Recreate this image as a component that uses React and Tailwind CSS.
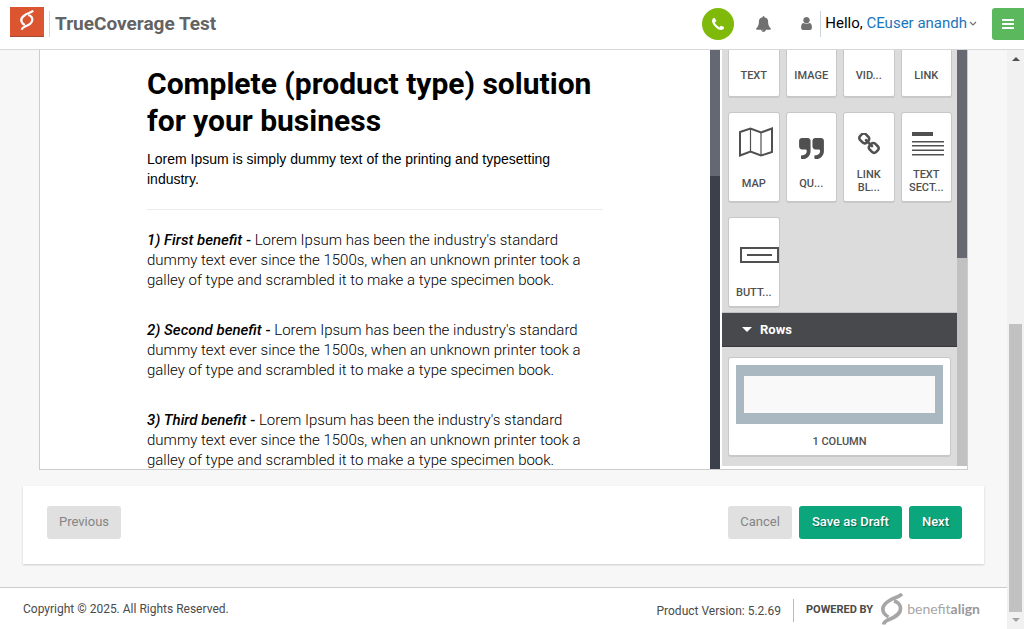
import React from "react";

const PATHS = {
  phone:
    "M1408 1112q0 27-10 70.5t-21 68.5q-21 50-122 106-94 51-186 51-27 0-53-3.5t-57.5-12.5-47-14.5-55.5-20.5-49-18q-98-35-175-83-127-79-264-216t-216-264q-48-77-83-175-3-9-18-49t-20.5-55.5-14.5-47-12.5-57.5-3.5-53q0-92 51-186 56-101 106-122 25-11 68.5-21t70.5-10q14 0 21 3 18 6 53 76 11 19 30 54t35 63.5 31 53.5q3 4 17.5 25t21.5 35.5 7 28.5q0 20-28.5 50t-62 55-62 53-28.5 46q0 9 5 22.5t8.5 20.5 14 24 11.5 19q76 137 174 235t235 174q2 1 19 11.5t24 14 20.5 8.5 22.5 5q18 0 46-28.5t53-62 55-62 50-28.5q14 0 28.5 7t35.5 21.5 25 17.5q25 15 53.5 31t63.5 35 54 30q70 35 76 53 3 7 3 21z",
  bell:
    "M912 1696q0-16-16-16-59 0-101.5-42.5t-42.5-101.5q0-16-16-16t-16 16q0 73 51.5 124.5t124.5 51.5q16 0 16-16zm816-288q0 52-38 90t-90 38h-448q0 106-75 181t-181 75-181-75-75-181h-448q-52 0-90-38t-38-90q50-42 91-88t85-119.5 74.5-158.5 50-206 19.5-260q0-152 117-282.5t307-158.5q-8-19-8-39 0-40 28-68t68-28 68 28 28 68q0 20-8 39 190 28 307 158.5t117 282.5q0 139 19.5 260t50 206 74.5 158.5 85 119.5 91 88z",
  user:
    "M1536 1399q0 109-62.5 187t-150.5 78h-854q-88 0-150.5-78t-62.5-187q0-85 8.5-160.5t31.5-152 58.5-131 94-89 134.5-34.5q131 128 313 128t313-128q76 0 134.5 34.5t94 89 58.5 131 31.5 152 8.5 160.5zm-256-887q0 159-112.5 271.5t-271.5 112.5-271.5-112.5-112.5-271.5 112.5-271.5 271.5-112.5 271.5 112.5 112.5 271.5z",
  quote:
    "M832 320v704q0 104-40.5 198.5t-109.5 163.5-163.5 109.5-198.5 40.5h-64q-26 0-45-19t-19-45v-128q0-26 19-45t45-19h64q106 0 181-75t75-181v-32q0-40-28-68t-68-28h-224q-80 0-136-56t-56-136v-384q0-80 56-136t136-56h384q80 0 136 56t56 136zm896 0v704q0 104-40.5 198.5t-109.5 163.5-163.5 109.5-198.5 40.5h-64q-26 0-45-19t-19-45v-128q0-26 19-45t45-19h64q106 0 181-75t75-181v-32q0-40-28-68t-68-28h-224q-80 0-136-56t-56-136v-384q0-80 56-136t136-56h384q80 0 136 56t56 136z",
  link:
    "M1520 1216q0-40-28-68l-208-208q-28-28-68-28-42 0-72 32 3 3 19 18.5t21.5 21.5 15 19 13 25.5 3.5 27.5q0 40-28 68t-68 28q-15 0-27.5-3.5t-25.5-13-19-15-21.5-21.5-18.5-19q-33 31-33 73 0 40 28 68l206 207q27 27 68 27 40 0 68-26l147-146q28-28 28-67zm-703-705q0-40-28-68l-206-207q-28-28-68-28-39 0-68 27l-147 146q-28 28-28 67 0 40 28 68l208 208q27 27 68 27 42 0 72-31-3-3-19-18.5t-21.5-21.5-15-19-13-25.5-3.5-27.5q0-40 28-68t68-28q15 0 27.5 3.5t25.5 13 19 15 21.5 21.5 18.5 19q33-31 33-73zm895 705q0 120-85 203l-147 146q-83 83-203 83-121 0-204-85l-206-207q-83-83-83-203 0-123 88-209l-88-88q-86 88-208 88-120 0-204-84l-208-208q-84-84-84-204t85-203l147-146q83-83 203-83 121 0 204 85l206 207q83 83 83 203 0 123-88 209l88 88q86-88 208-88 120 0 204 84l208 208q84 84 84 204z",
};

function Glyph({ name, viewBox, className }) {
  return (
    <svg viewBox={viewBox} className={className} fill="currentColor" aria-hidden="true">
      <path d={PATHS[name]} />
    </svg>
  );
}

function Knot({ className }) {
  return (
    <svg viewBox="0 0 22 32" className={className} fill="none" stroke="currentColor" strokeWidth="3.600" aria-hidden="true">
      <path d="M21 1C17.500 4.500 13 4.500 8.500 7.500C2.500 11 0.500 15.500 3 20C4 21.800 5.500 23 7.500 24" />
      <path d="M13 8C17 9 19.800 12 19.500 16C19 22 13 24.500 8 26.500C5 27.700 3 29 2.500 31.500" />
    </svg>
  );
}

function MapIcon() {
  return (
    <svg viewBox="0 0 34 30" className="h-[30px] w-[34px] shrink-0" fill="none" stroke="currentColor" strokeWidth="2" aria-hidden="true">
      <path d="M1 5L11.500 1.500L22 5.500L33 1.500V25L22 28.500L11.500 24.500L1 28.500Z" />
      <path d="M11.500 1.500V24.500M22 5.500V28.500" strokeWidth="1.200" />
    </svg>
  );
}

function TextSectionIcon() {
  return (
    <svg viewBox="0 0 32 24" className="h-6 w-8 shrink-0" fill="currentColor" aria-hidden="true">
      <path d="M0 0h21v4H0zM0 9h32v1.500H0zM0 13h32v1.500H0zM0 17.500h32v1.500H0zM0 22h32v1.500H0z" />
    </svg>
  );
}

function ButtonIcon() {
  return (
    <svg viewBox="0 0 39 16" className="h-4 w-[39px] shrink-0" fill="none" stroke="currentColor" strokeWidth="2" aria-hidden="true">
      <path d="M1 1H38V15H1Z" />
      <path d="M7 8H32" />
    </svg>
  );
}

const TILES = [
  {
    lines: ["MAP"],
    icon: <MapIcon />,
    pad: "pt-[14px] pl-[5px]",
    bottom: "pb-[11px]",
  },
  {
    lines: ["QU..."],
    icon: <Glyph name="quote" viewBox="64 128 1664 1408" className="h-[21px] w-[25px]" />,
    pad: "pt-[25px]",
    bottom: "pb-[11px]",
  },
  {
    lines: ["LINK", "BL..."],
    icon: <Glyph name="link" viewBox="80 80 1632 1632" className="size-[22px]" />,
    pad: "pt-5",
    bottom: "pb-[7px]",
  },
  {
    lines: ["TEXT", "SECT..."],
    icon: <TextSectionIcon />,
    pad: "pt-[19px] pl-1",
    bottom: "pb-[7px]",
  },
  {
    lines: ["BUTT..."],
    icon: <ButtonIcon />,
    pad: "pt-[29px] pl-[11px]",
    bottom: "pb-[7px]",
  },
];

const BENEFITS = ["1) First benefit", "2) Second benefit", "3) Third benefit"];

function Tile({ lines, icon, pad, bottom }) {
  return (
    <button
      type="button"
      className={
        "flex h-[91px] min-w-0 flex-col overflow-hidden rounded-[3px] border border-b-2 border-[#c8c8c8] bg-white text-[11px] leading-[13px] font-medium text-[#505050] " +
        bottom
      }
    >
      <span className={"flex w-full flex-1 justify-center " + pad}>{icon}</span>
      <span className="flex w-full flex-col items-center">
        {lines.map((line) => (
          <span key={line}>{line}</span>
        ))}
      </span>
    </button>
  );
}

function Header() {
  return (
    <header className="flex h-[50px] shrink-0 items-center border-b border-[#d8d8d8] bg-white pb-[2px] pl-[10px]">
      <div className="mb-[3px] flex h-[30px] w-[34px] items-center justify-center border-b border-[#a34a33] bg-[#db5531] pb-1 text-white">
        <Knot className="h-5 w-[14px]" />
      </div>
      <h1 className="ml-[5px] flex h-[26px] items-center border-l border-[#d8d8d8] pl-[5px] text-[19px] leading-6 font-bold text-[#636363]">
        TrueCoverage Test
      </h1>
      <div className="ml-auto flex items-center">
        <button type="button" aria-label="Call" className="flex size-8 items-center justify-center rounded-full bg-[#7fba0b] text-white">
          <Glyph name="phone" viewBox="0 0 1408 1408" className="size-3" />
        </button>
        <button type="button" aria-label="Notifications" className="ml-[22px] text-[#707070]">
          <Glyph name="bell" viewBox="64 0 1664 1792" className="h-4 w-[15px]" />
        </button>
        <button type="button" aria-label="Profile" className="ml-[30px] text-[#707070]">
          <Glyph name="user" viewBox="256 128 1280 1536" className="h-[13px] w-[11px]" />
        </button>
        <div className="ml-2 flex h-[26px] items-center border-l border-[#ccd6e0] pl-1 text-[15px] text-black">
          <span>
            Hello, <a href="#account" className="text-[#1b75bb]">CEuser anandh</a>
          </span>
          <svg viewBox="0 0 8 5" className="ml-[2px] h-[5px] w-2" fill="none" stroke="#707070" strokeWidth="1.200" aria-hidden="true">
            <path d="M1 1L4 4L7 1" />
          </svg>
        </div>
        <button type="button" aria-label="Menu" className="ml-[15px] flex size-8 items-center justify-center rounded-l-[3px] bg-[#5cb85c] text-white">
          <svg viewBox="0 0 12 10" className="h-[10px] w-3" fill="currentColor" aria-hidden="true">
            <path d="M0 0h12v2H0zM0 4h12v2H0zM0 8h12v2H0z" />
          </svg>
        </button>
      </div>
    </header>
  );
}

function Preview() {
  return (
    <div className="min-w-0 flex-1 overflow-hidden bg-white pr-[107px] pl-[107px] text-black">
      <h2 className="pt-[15px] text-[30px] leading-[37px] font-bold">
        Complete (product type) solution
        <br />
        for your business
      </h2>
      <p className="mt-[10px] max-w-[420px] font-['Liberation_Sans',sans-serif] text-[14px] leading-5">
        Lorem Ipsum is simply dummy text of the printing and typesetting industry.
      </p>
      <hr className="mt-5 mb-5 border-[#ececec]" />
      {BENEFITS.map((title) => (
        <p key={title} className="mb-[30px] max-w-[440px] text-[15px] leading-5 font-light">
          <em className="font-medium">{title}</em>
          <span className="font-medium"> -</span> Lorem Ipsum has been the industry's standard dummy text ever since the
          1500s, when an unknown printer took a galley of type and scrambled it to make a type specimen book.
        </p>
      ))}
    </div>
  );
}

function Blocks() {
  return (
    <aside className="flex w-[245px] shrink-0">
      <div className="min-w-0 flex-1 overflow-hidden bg-[#dcdcdc]">
        <div className="grid grid-cols-4 gap-x-[6px] pr-[5px] pl-[6px]">
          {["TEXT", "IMAGE", "VID...", "LINK"].map((label) => (
            <button
              key={label}
              type="button"
              className="h-12 min-w-0 rounded-b-[3px] border-x border-b-2 border-[#c8c8c8] bg-white pt-1 text-[11px] leading-[13px] font-medium text-[#505050]"
            >
              {label}
            </button>
          ))}
        </div>
        <div className="mt-[14px] grid grid-cols-4 gap-x-[6px] gap-y-[14px] pr-[5px] pl-[6px]">
          {TILES.map((tile) => (
            <Tile key={tile.lines[0]} {...tile} />
          ))}
        </div>
        <button
          type="button"
          aria-expanded="true"
          className="mt-1 flex h-[35px] w-full items-center border-t border-b border-t-[#c0c0c0] border-b-[#38363a] bg-[#48494c] pl-5 text-[13px] font-bold text-white"
        >
          <svg viewBox="0 0 10 5" className="mr-2 h-[5px] w-[10px]" fill="currentColor" aria-hidden="true">
            <path d="M0 0H10L5 5Z" />
          </svg>
          <span>Rows</span>
        </button>
        <div className="px-[6px] pt-[10px]">
          <button
            type="button"
            className="flex w-full flex-col items-center rounded-[3px] border border-b-2 border-[#c8c8c8] bg-white px-[7px] pt-[7px] pb-[7px] text-[11px] leading-[13px] font-medium text-[#505050]"
          >
            <span className="block h-[59px] w-full border-x-8 border-y-11 border-[#a9b8c1] bg-[#f9f9f9]" />
            <span className="mt-[11px]">1 COLUMN</span>
          </button>
        </div>
      </div>
      <div className="flex w-[10px] flex-col bg-[#c1c1c1]">
        <div className="h-1/2 bg-[#666872]" />
      </div>
    </aside>
  );
}

function Actions() {
  const gray = "h-[33px] rounded-[3px] bg-[#e0e0e0] px-3 pb-[2px] text-[13px] text-[#848484]";
  const green =
    "h-[33px] rounded-[3px] bg-[#0ba67c] px-[13px] pb-[2px] text-[13px] font-medium text-white [text-shadow:1px_1px_1px_rgba(0,0,0,0.4)]";
  return (
    <div className="flex items-center bg-white pt-5 pr-[22px] pb-[25px] pl-6 shadow-[0_1px_2px_rgba(0,0,0,0.18)]">
      <button type="button" className={gray}>Previous</button>
      <div className="ml-auto flex items-center gap-[7px]">
        <button type="button" className={gray}>Cancel</button>
        <button type="button" className={green}>Save as Draft</button>
        <button type="button" className={green}>Next</button>
      </div>
    </div>
  );
}

function Footer() {
  return (
    <footer className="flex h-[42px] shrink-0 items-center border-t border-[#cccccc] bg-white pr-[27px] pl-[23px] text-[12px] text-[#4a4a4a]">
      <span>Copyright © 2025. All Rights Reserved.</span>
      <span className="ml-auto pt-1">Product Version: 5.2.69</span>
      <span className="mt-1 ml-3 flex h-[23px] items-center border-l border-[#bbbbbb] pl-3 text-[11px] font-bold">POWERED BY</span>
      <span className="ml-2 flex items-center text-[#a6a6a6]">
        <Knot className="h-8 w-[22px]" />
        <span className="ml-1 font-['Lato',sans-serif] text-[14px]">
          benefit<b className="text-[#999999]">align</b>
        </span>
      </span>
    </footer>
  );
}

export default function App() {
  return (
    <div className="flex h-screen flex-col overflow-hidden bg-[#f7f7f7] font-['Roboto',sans-serif]">
      <Header />
      <div className="flex min-h-0 flex-1">
        <div className="flex min-w-0 flex-1 flex-col">
          <main className="mr-[23px] mb-[23px] ml-[23px] flex min-h-0 flex-1 flex-col">
            <div className="mx-4 mb-4 flex min-h-0 flex-1 border border-t-0 border-[#cccccc] bg-white">
              <Preview />
              <div className="mr-[2px] w-[10px] shrink-0 bg-[#3c404b]">
                <div className="h-[30%] bg-[#636872]" />
              </div>
              <div className="mb-[3px] flex shrink-0">
                <Blocks />
              </div>
            </div>
            <Actions />
          </main>
          <Footer />
        </div>
        <div className="flex w-[17px] shrink-0 flex-col items-center bg-[#f1f1f1] py-[7px]">
          <svg viewBox="0 0 8 4" className="h-1 w-2 shrink-0" fill="#505050" aria-hidden="true">
            <path d="M0 4L4 0L8 4Z" />
          </svg>
          <div className="flex-1" />
          <div className="mb-[6px] h-[51%] w-[13px] bg-[#c1c1c1]" />
          <svg viewBox="0 0 8 4" className="h-1 w-2 shrink-0" fill="#a3a3a3" aria-hidden="true">
            <path d="M0 0H8L4 4Z" />
          </svg>
        </div>
      </div>
    </div>
  );
}
